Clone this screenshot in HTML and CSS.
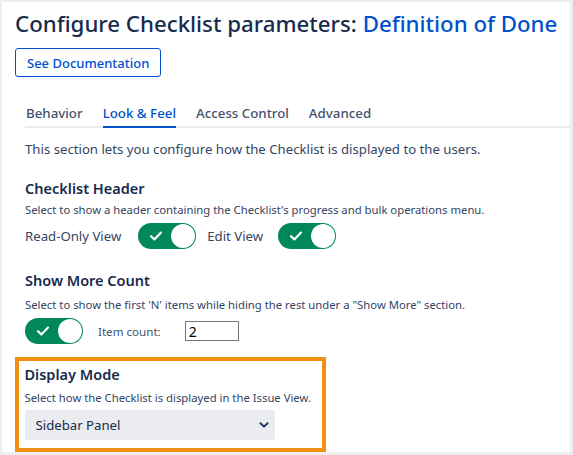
FILE: index.html
```html
<!DOCTYPE html>
<html>
<head>
<meta charset="utf-8">
<link rel="stylesheet" href="styles.css">
</head>
<body>
<div class="panel">
  <h1 class="title">Configure Checklist parameters: <span class="title-accent">Definition of Done</span></h1>
  <button class="doc-btn">See Documentation</button>
  <div class="content">
    <nav class="tabs">
      <span class="tab">Behavior</span>
      <span class="tab tab-active">Look &amp; Feel</span>
      <span class="tab">Access Control</span>
      <span class="tab">Advanced</span>
    </nav>
    <p class="intro">This section lets you configure how the Checklist is displayed to the users.</p>

    <section class="group">
      <h2 class="group-title">Checklist Header</h2>
      <p class="help">Select to show a header containing the Checklist's progress and bulk operations menu.</p>
      <div class="row">
        <span class="label label-ro">Read-Only View</span>
        <span class="toggle"><svg class="check" viewBox="0 0 14 12" width="14" height="12"><path d="M2 6.2 L5.4 9.4 L12 2.6" fill="none" stroke="#fff" stroke-width="2.2" stroke-linecap="round" stroke-linejoin="round"/></svg><span class="knob"></span></span>
        <span class="label label-edit">Edit View</span>
        <span class="toggle"><svg class="check" viewBox="0 0 14 12" width="14" height="12"><path d="M2 6.2 L5.4 9.4 L12 2.6" fill="none" stroke="#fff" stroke-width="2.2" stroke-linecap="round" stroke-linejoin="round"/></svg><span class="knob"></span></span>
      </div>
    </section>

    <section class="group group-more">
      <h2 class="group-title">Show More Count</h2>
      <p class="help">Select to show the first 'N' items while hiding the rest under a "Show More" section.</p>
      <div class="row row-count">
        <span class="toggle"><svg class="check" viewBox="0 0 14 12" width="14" height="12"><path d="M2 6.2 L5.4 9.4 L12 2.6" fill="none" stroke="#fff" stroke-width="2.2" stroke-linecap="round" stroke-linejoin="round"/></svg><span class="knob"></span></span>
        <span class="count-label">Item count:</span>
        <input class="count-input" type="text" value="2">
      </div>
    </section>

    <section class="group display-mode">
      <h2 class="group-title">Display Mode</h2>
      <p class="help">Select how the Checklist is displayed in the Issue View.</p>
      <div class="select">
        <span>Sidebar Panel</span>
        <svg class="chev" viewBox="0 0 10 6" width="10" height="6"><path d="M1.5 1.2 L5 4.6 L8.5 1.2" fill="none" stroke="#253858" stroke-width="2" stroke-linecap="round" stroke-linejoin="round"/></svg>
      </div>
    </section>
  </div>
</div>
</body>
</html>
```

FILE: styles.css
```css
* { box-sizing: border-box; }
html, body { margin: 0; padding: 0; }
body {
  background: #eeeeee;
  width: 573px;
  height: 455px;
  overflow: hidden;
  font-family: "Noto Sans", "Open Sans", sans-serif;
  color: #172b4d;
}
.panel {
  margin: 2px 3px 0 2px;
  height: 450px;
  background: #fff;
  padding: 0 0 0 13px;
  display: flex;
  flex-direction: column;
  align-items: flex-start;
}
.title {
  margin: 6px 0 0 0;
  font-size: 22.25px;
  line-height: 32px;
  font-weight: 500;
  color: #172b4d;
  white-space: nowrap;
}
.title-accent { color: #0052cc; }
.doc-btn {
  margin-top: 8px;
  height: 29px;
  padding: 0 11px;
  background: #fff;
  border: 1px solid #0052cc;
  border-radius: 3px;
  color: #0052cc;
  font-family: inherit;
  font-size: 13px;
  font-weight: 500;
}
.content {
  align-self: stretch;
  padding-left: 10px;
  display: flex;
  flex-direction: column;
  align-items: flex-start;
}
.tabs {
  margin-top: 26px;
  align-self: stretch;
  display: flex;
  gap: 20px;
  border-bottom: 2px solid #ebecf0;
  padding-left: 1px;
}
.tab {
  font-size: 13.3px;
  line-height: 20px;
  color: #42526e;
  font-weight: 500;
  padding-bottom: 3px;
  margin-bottom: -2px;
  border-bottom: 2px solid transparent;
}
.tab-active { color: #0052cc; border-bottom-color: #0052cc; }
.intro {
  margin: 11px 0 0 0;
  font-size: 13.2px;
  line-height: 20px;
  color: #344563;
}
.group { display: flex; flex-direction: column; align-items: flex-start; }
.group-title {
  margin: 18px 0 0 0;
  font-size: 14.5px;
  line-height: 22px;
  font-weight: 600;
  color: #172b4d;
}
.help {
  margin: 2px 0 0 0;
  font-size: 11.3px;
  line-height: 18px;
  color: #344563;
}
.row {
  margin-top: 4px;
  display: flex;
  align-items: center;
}
.label { font-size: 13.2px; color: #344563; line-height: 26px; }
.label-ro { margin-right: 17px; }
.label-edit { margin-left: 11px; margin-right: 15px; }
.toggle {
  position: relative;
  width: 58px;
  height: 26px;
  border-radius: 13px;
  background: #00875a;
  display: inline-block;
  flex: none;
}
.check { position: absolute; left: 11px; top: 7px; }
.knob {
  position: absolute;
  right: 1px;
  top: 1px;
  width: 24px;
  height: 24px;
  border-radius: 50%;
  background: #fff;
}
.group-more .group-title { margin-top: 20px; }
.group-more .help { margin-top: 5px; }
.row-count { margin-top: 4px; }
.count-label { margin-left: 15px; font-size: 11.6px; color: #42526e; }
.count-input {
  margin-left: 24px;
  width: 54px;
  height: 20px;
  border: 1px solid #767676;
  padding: 0 0 0 3px;
  font-family: "Noto Sans", sans-serif;
  font-size: 14px;
  color: #000;
  outline: none;
}
.display-mode {
  margin-top: 13px;
  margin-left: -10px;
  width: 311px;
  height: 95px;
  border: 4.5px solid #f29111;
  padding: 0 0 0 5.5px;
}
.display-mode .group-title { margin-top: 2px; }
.display-mode .help { margin-top: 4px; }
.select {
  margin-top: 3px;
  width: 250px;
  height: 30px;
  background: #ebecf0;
  border-radius: 3px;
  display: flex;
  align-items: center;
  justify-content: space-between;
  padding: 0 6px 0 11px;
  font-size: 13.2px;
  color: #172b4d;
}
.chev { display: block; }
```
